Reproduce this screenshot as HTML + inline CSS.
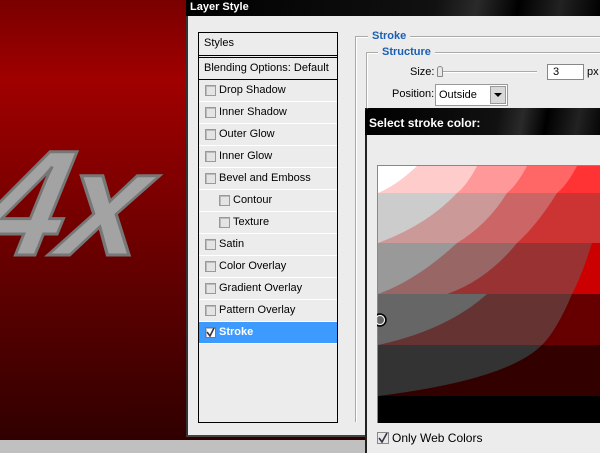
<!DOCTYPE html>
<html><head><style>
*{margin:0;padding:0;box-sizing:border-box}
body{width:600px;height:450px;overflow:hidden;position:relative;font-family:"Liberation Sans",sans-serif;font-size:11px;color:#000;background:#c0c0c0}
.abs{position:absolute}
.bg{left:0;top:0;width:600px;height:440px;background:linear-gradient(#7a0000 0,#a00000 80px,#8a0000 150px,#5a0000 300px,#300000 440px)}
.logo{left:-14px;top:128px;font:italic bold 150px "Liberation Sans",sans-serif;color:#a3a3a3;-webkit-text-stroke:3px #777;letter-spacing:-4px;line-height:1;transform:skewX(-12deg);white-space:nowrap}
.dlg{left:186px;top:0;width:420px;height:437px;background:#ececec;border-left:2px solid #333;border-bottom:2px solid #444}
.title{left:186px;top:0;width:414px;height:16px;background:linear-gradient(100deg,#000 0,#111 60%,#2a2a2a 70%,#000 80%,#222 90%,#000);color:#fff;font-weight:bold;font-size:11px;padding:1px 0 0 4px}
.list{left:198px;top:32px;width:140px;height:391px;border:1px solid #000;background:#ececec}
.row{position:absolute;left:0;width:138px;height:22px;border-bottom:1px solid #fff;line-height:21px;padding-left:20px;white-space:nowrap}
.cb{position:absolute;left:6px;top:5px;width:11px;height:11px;border:1px solid #999;background:#e4e4e4;box-shadow:inset 1px 1px 0 #bbb}
.sub{padding-left:34px}.sub .cb{left:20px}
.sel{background:#3d9bff;color:#fff;font-weight:bold}
.sel .cb{background:#fff;border-color:#777}
.grp{font-weight:bold;color:#1a5fb4;background:#ececec;padding:0 4px}
.picker{left:365px;top:108px;width:240px;height:345px;background:#ececec;border-left:2px solid #222}
.ptitle{left:365px;top:108px;width:240px;height:27px;background:linear-gradient(100deg,#000 0,#111 55%,#2a2a2a 65%,#000 75%,#222 88%,#000);color:#fff;font-weight:bold;font-size:12px;padding:8px 0 0 4px;border-radius:4px 0 0 0}
</style></head><body>
<div class="abs bg"></div>
<div class="abs logo">4x</div>
<div class="abs dlg"></div>
<div class="abs title">Layer Style</div>
<div class="abs list">
<div class="row" style="top:0;padding-left:5px;border-bottom:3px double #000;height:25px">Styles</div>
<div class="row" style="top:25px;padding-left:5px;border-bottom:1px solid #000">Blending Options: Default</div>
<div class="row" style="top:47px"><span class="cb"></span>Drop Shadow</div>
<div class="row" style="top:69px"><span class="cb"></span>Inner Shadow</div>
<div class="row" style="top:91px"><span class="cb"></span>Outer Glow</div>
<div class="row" style="top:113px"><span class="cb"></span>Inner Glow</div>
<div class="row" style="top:135px"><span class="cb"></span>Bevel and Emboss</div>
<div class="row sub" style="top:157px"><span class="cb"></span>Contour</div>
<div class="row sub" style="top:179px"><span class="cb"></span>Texture</div>
<div class="row" style="top:201px"><span class="cb"></span>Satin</div>
<div class="row" style="top:223px"><span class="cb"></span>Color Overlay</div>
<div class="row" style="top:245px"><span class="cb"></span>Gradient Overlay</div>
<div class="row" style="top:267px"><span class="cb"></span>Pattern Overlay</div>
<div class="row sel" style="top:289px"><span class="cb"><svg width="9" height="9" style="position:absolute;left:0;top:0"><path d="M1 4 L4 8 L8 0" stroke="#334" stroke-width="1.6" fill="none"/></svg></span>Stroke</div>
</div>
<div class="abs" style="left:355px;top:36px;width:250px;height:386px;border-left:1px solid #aaa;border-top:1px solid #aaa;box-shadow:inset 1px 1px 0 #fff"></div>
<div class="abs grp" style="left:368px;top:30px">Stroke</div>
<div class="abs" style="left:366px;top:52px;width:240px;height:380px;border-left:1px solid #aaa;border-top:1px solid #aaa;box-shadow:inset 1px 1px 0 #fff"></div>
<div class="abs grp" style="left:378px;top:46px">Structure</div>
<div class="abs" style="left:410px;top:66px">Size:</div>
<div class="abs" style="left:440px;top:71px;width:97px;height:2px;background:#aaa;border-bottom:1px solid #fff"></div>
<div class="abs" style="left:437px;top:66px;width:6px;height:11px;border:1px solid #888;border-radius:3px 3px 1px 1px;background:#e8e8e8"></div>
<div class="abs" style="left:547px;top:64px;width:37px;height:16px;border:1px solid #888;background:#fff;padding:1px 0 0 5px">3</div>
<div class="abs" style="left:587px;top:66px">px</div>
<div class="abs" style="left:392px;top:88px">Position:</div>
<div class="abs" style="left:435px;top:84px;width:73px;height:22px;border:1px solid #999;background:#fff;padding:4px 0 0 3px">Outside
<div class="abs" style="left:54px;top:1px;width:16px;height:18px;background:#d8d8d8;border:1px solid #999"><svg width="14" height="16"><path d="M3 6 L11 6 L7 10 Z" fill="#000"/></svg></div></div>
<div class="abs picker"></div>
<div class="abs ptitle">Select stroke color:</div>
<svg class="abs" style="left:377px;top:165px" width="223" height="258">
<rect x="0" y="0" width="223" height="258" fill="#888"/>
<rect x="1" y="1" width="222" height="27" fill="#ff3333"/>
<rect x="1" y="28" width="222" height="50" fill="#cc3333"/>
<rect x="1" y="78" width="222" height="51" fill="#b00000"/>
<rect x="1" y="129" width="222" height="51" fill="#660000"/>
<rect x="1" y="180" width="222" height="51" fill="#330000"/>
<rect x="1" y="231" width="222" height="27" fill="#000"/>
<!-- progressive curved grey overlays -->
<g fill="#fff">
<path d="M1 230 L1 180 L1 1 L200 1 Q195 110 120 160 Q60 200 1 230Z" fill="#333"/>
</g>
<clipPath id="r1"><rect x="1" y="1" width="222" height="27"/></clipPath>
<clipPath id="r2"><rect x="1" y="28" width="222" height="50"/></clipPath>
<clipPath id="r3"><rect x="1" y="78" width="222" height="51"/></clipPath>
<clipPath id="r4"><rect x="1" y="129" width="222" height="51"/></clipPath>
<clipPath id="r5"><rect x="1" y="180" width="222" height="51"/></clipPath>
<g clip-path="url(#r1)">
<rect x="1" y="1" width="222" height="27" fill="#ff3333"/>
<path d="M1 1 H200 Q190 20 180 28 H1Z" fill="#ff6666"/>
<path d="M1 1 H150 Q140 20 130 28 H1Z" fill="#ff9999"/>
<path d="M1 1 H100 Q90 20 80 28 H1Z" fill="#ffcccc"/>
<path d="M1 1 H40 Q20 20 1 28Z" fill="#fff"/>
</g>
<g clip-path="url(#r2)">
<rect x="1" y="28" width="222" height="50" fill="#cc3333"/>
<path d="M1 28 H180 Q160 60 140 78 H1Z" fill="#cc6666"/>
<path d="M1 28 H130 Q110 60 80 78 H1Z" fill="#cc9999"/>
<path d="M1 28 H80 Q50 60 1 78Z" fill="#cccccc"/>
</g>
<g clip-path="url(#r3)">
<rect x="1" y="78" width="222" height="51" fill="#cc0000"/>
<path d="M1 78 H215 Q205 110 195 129 H1Z" fill="#993333"/>
<path d="M1 78 H140 Q110 115 70 129 H1Z" fill="#996666"/>
<path d="M1 78 H80 Q40 115 1 129Z" fill="#999999"/>
</g>
<g clip-path="url(#r4)">
<rect x="1" y="129" width="222" height="51" fill="#660000"/>
<path d="M1 129 H195 Q180 165 165 180 H1Z" fill="#663333"/>
<path d="M1 129 H110 Q70 165 1 180Z" fill="#666666"/>
</g>
<g clip-path="url(#r5)">
<rect x="1" y="180" width="222" height="51" fill="#330000"/>
<path d="M1 180 H165 Q130 215 1 231Z" fill="#333333"/>
</g>
<circle cx="3" cy="155" r="6" fill="none" stroke="#000" stroke-width="1.5"/>
<circle cx="3" cy="155" r="4.5" fill="none" stroke="#fff" stroke-width="1"/>
</svg>
<div class="abs" style="left:377px;top:432px;width:12px;height:12px;border:1px solid #888;background:#e8e8e8"><svg width="10" height="10" style="position:absolute;left:0;top:0"><path d="M1 5 L4 9 L9 0" stroke="#334" stroke-width="1.6" fill="none"/></svg></div>
<div class="abs" style="left:392px;top:431px;font-size:12px">Only Web Colors</div>
</body></html>
